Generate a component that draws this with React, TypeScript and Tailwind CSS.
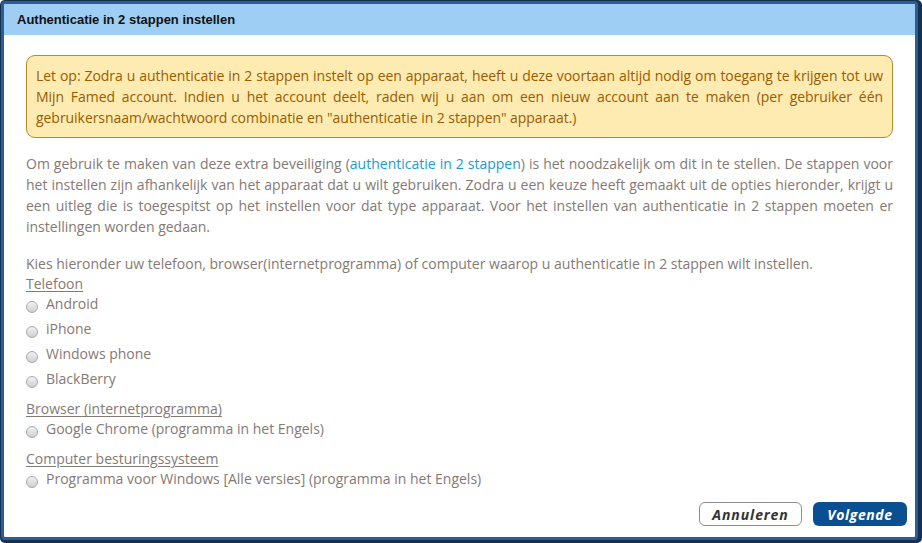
import React, { useState } from 'react';

const body = { fontFamily: '"Open Sans", "Liberation Sans", sans-serif' };

const groups = [
  { title: 'Telefoon', options: ['Android', 'iPhone', 'Windows phone', 'BlackBerry'] },
  { title: 'Browser (internetprogramma)', options: ['Google Chrome (programma in het Engels)'] },
  { title: 'Computer besturingssysteem', options: ['Programma voor Windows [Alle versies] (programma in het Engels)'] },
];

const Radio: React.FC<{ checked: boolean }> = ({ checked }) => (
  <span className="mt-[7px] mr-[8px] inline-block h-[12px] w-[12px] shrink-0 rounded-full border border-[#a9a9a9] bg-gradient-to-b from-[#f2f2f2] to-[#cfcfcf]">
    {checked && <span className="m-[3px] block h-[4px] w-[4px] rounded-full bg-[#444]" />}
  </span>
);

export default function App() {
  const [choice, setChoice] = useState('');

  return (
    <div className="h-[543px] w-[922px] overflow-hidden rounded-[5px] bg-[#16304d] pt-px pl-px pr-[4px] pb-[3px]">
      <div className="flex h-full flex-col rounded-[4px] border-[3px] border-[#2b5e98] bg-white" style={body}>
        <div
          className="flex h-[31px] items-center bg-[#9fcef4] px-[13px] text-[13px] font-bold text-[#111]"
          style={{ fontFamily: '"Liberation Sans", Arial, sans-serif' }}
        >
          Authenticatie in 2 stappen instellen
        </div>

        <div className="flex flex-1 flex-col px-[22px] pt-[20px]">
          <div className="rounded-[9px] border border-[#c0872a] bg-[#fdebb1] px-[9px] py-[9px] text-justify text-[14px] leading-[21px] tracking-[-0.05px] text-[#9b5b00]">
            Let op: Zodra u authenticatie in 2 stappen instelt op een apparaat, heeft u deze voortaan altijd nodig om toegang te krijgen tot uw Mijn Famed account. Indien u het account deelt, raden wij u aan om een nieuw account aan te maken (per gebruiker één gebruikersnaam/wachtwoord combinatie en "authenticatie in 2 stappen" apparaat.)
          </div>

          <p className="mt-[15px] text-justify text-[14px] leading-[21px] text-[#857975]">
            Om gebruik te maken van deze extra beveiliging (<a className="text-[#1a9ad6]">authenticatie in 2 stappen</a>) is het noodzakelijk om dit in te stellen. De stappen voor het instellen zijn afhankelijk van het apparaat dat u wilt gebruiken. Zodra u een keuze heeft gemaakt uit de opties hieronder, krijgt u een uitleg die is toegespitst op het instellen voor dat type apparaat. Voor het instellen van authenticatie in 2 stappen moeten er instellingen worden gedaan.
          </p>

          <p className="mt-[17px] text-[14px] leading-[20px] text-[#857975]">
            Kies hieronder uw telefoon, browser(internetprogramma) of computer waarop u authenticatie in 2 stappen wilt instellen.
          </p>

          <div className="flex flex-col gap-[10px] text-[14px] text-[#857975]">
            {groups.map((g) => (
              <div key={g.title} className="flex flex-col">
                <span className="leading-[20px] underline underline-offset-2">{g.title}</span>
                <div className="flex flex-col gap-[5px]">
                  {g.options.map((o) => (
                    <label key={o} className="flex items-start leading-[20px]" onClick={() => setChoice(o)}>
                      <Radio checked={choice === o} />
                      <span>{o}</span>
                    </label>
                  ))}
                </div>
              </div>
            ))}
          </div>

          <div className="mt-auto -mr-[14px] mb-[11px] flex justify-end gap-[11px]">
            <button className="h-[24px] w-[103px] rounded-[6px] border border-[#8d8d8d] bg-white text-[14px] font-bold italic tracking-[0.9px] text-[#333]">
              Annuleren
            </button>
            <button className="h-[24px] w-[94px] rounded-[6px] bg-[#0b4f93] text-[14px] font-bold italic tracking-[0.6px] text-white">
              Volgende
            </button>
          </div>
        </div>
      </div>
    </div>
  );
}
